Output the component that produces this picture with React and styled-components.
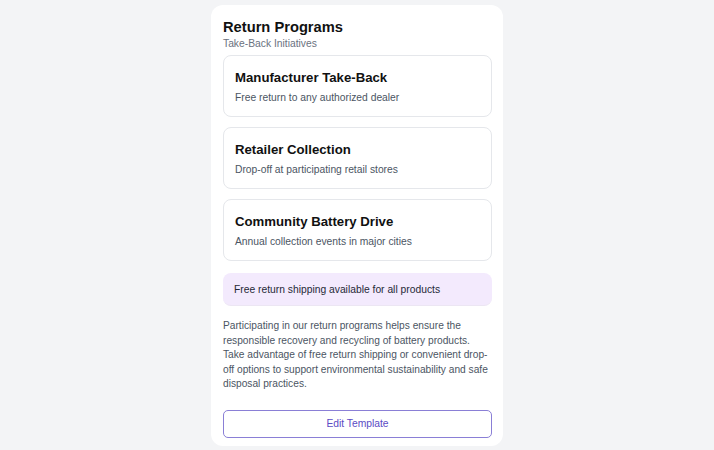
import React from "react";
import styled, { createGlobalStyle } from "styled-components";

const Global = createGlobalStyle`
  html, body { margin: 0; padding: 0; background: #f3f4f6; }
  body { font-family: "Liberation Sans", Arial, sans-serif; }
`;

const Page = styled.div`
  display: flex;
  justify-content: center;
  padding-top: 5px;
`;

const Panel = styled.section`
  width: 292px;
  box-sizing: border-box;
  background: #ffffff;
  border-radius: 12px;
  padding: 13px 11px 8px 12px;
  display: flex;
  flex-direction: column;
`;

const Title = styled.h2`
  margin: 0;
  font-size: 14.7px;
  line-height: 19px;
  font-weight: 700;
  color: #111111;
`;

const Subtitle = styled.div`
  font-size: 10.3px;
  line-height: 14px;
  color: #6b7280;
  margin-bottom: 4px;
`;

const List = styled.div`
  display: flex;
  flex-direction: column;
  gap: 10px;
`;

const Item = styled.div`
  border: 1px solid #e5e7eb;
  border-radius: 8px;
  padding: 13px 11px 0 11px;
  height: 62px;
  box-sizing: border-box;
`;

const ItemTitle = styled.div`
  font-size: 13.2px;
  line-height: 18px;
  font-weight: 700;
  color: #111111;
`;

const ItemDesc = styled.div`
  margin-top: 4px;
  font-size: 10.3px;
  line-height: 14px;
  color: #4b5563;
`;

const Notice = styled.div`
  margin-top: 12px;
  height: 33px;
  box-sizing: border-box;
  background: #f3eafd;
  border-radius: 8px;
  border-bottom: 1px solid #ece6f3;
  padding: 0 11px;
  display: flex;
  align-items: center;
  font-size: 10.3px;
  color: #1f2937;
`;

const Body = styled.p`
  margin: 13px 0 0 0;
  max-width: 267px;
  font-size: 10.2px;
  line-height: 14.6px;
  color: #4b5563;
`;

const Button = styled.button`
  margin-top: 18px;
  height: 28px;
  width: 100%;
  box-sizing: border-box;
  background: #ffffff;
  border: 1.5px solid #8a7fd6;
  border-radius: 5px;
  font-family: inherit;
  font-size: 10.3px;
  color: #5b4bc4;
`;

const programs = [
  { title: "Manufacturer Take-Back", desc: "Free return to any authorized dealer" },
  { title: "Retailer Collection", desc: "Drop-off at participating retail stores" },
  { title: "Community Battery Drive", desc: "Annual collection events in major cities" },
];

export default function App() {
  return (
    <>
      <Global />
      <Page>
        <Panel>
          <Title>Return Programs</Title>
          <Subtitle>Take-Back Initiatives</Subtitle>
          <List>
            {programs.map((p) => (
              <Item key={p.title}>
                <ItemTitle>{p.title}</ItemTitle>
                <ItemDesc>{p.desc}</ItemDesc>
              </Item>
            ))}
          </List>
          <Notice>Free return shipping available for all products</Notice>
          <Body>
            Participating in our return programs helps ensure the responsible recovery and
            recycling of battery products. Take advantage of free return shipping or convenient
            drop-<wbr />off options to support environmental sustainability and safe disposal
            practices.
          </Body>
          <Button>Edit Template</Button>
        </Panel>
      </Page>
    </>
  );
}
